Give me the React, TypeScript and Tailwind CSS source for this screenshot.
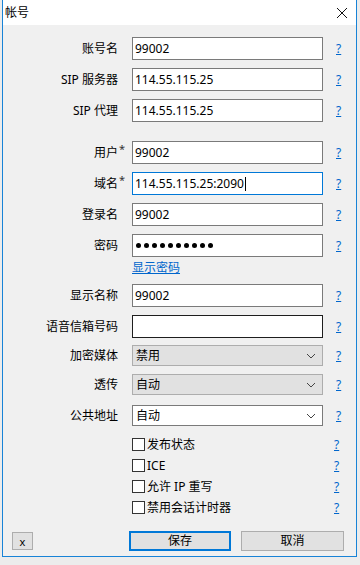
import React from 'react';

const font = { fontFamily: '"Noto Sans", "Noto Sans CJK SC", sans-serif' };

function Help() {
  return <span className="ml-[13px] text-[12px] leading-none text-[#0066cc] underline">?</span>;
}

function Label({ text, star }: { text: string; star?: boolean }) {
  return (
    <div className="w-[115px] shrink-0 text-right text-[12px] leading-none text-black">
      <span className="relative">
        {text}
        {star && <span className="absolute left-full top-[-1px] ml-[1px] text-[11px] text-[#333]">*</span>}
      </span>
    </div>
  );
}

function TextRow({
  label,
  value,
  star,
  border = 'border-[#7a7a7a]',
  caret,
  mt,
}: {
  label: string;
  value?: string;
  star?: boolean;
  border?: string;
  caret?: boolean;
  mt: string;
}) {
  return (
    <div className={`flex items-center ${mt}`}>
      <Label text={label} star={star} />
      <div className={`ml-[14px] flex h-[23px] w-[191px] items-center border bg-white pl-[2px] text-[12px] text-black ${border}`}>
        <span>{value}</span>
        {caret && <span className="ml-[1px] h-[14px] w-px bg-black" />}
      </div>
      <Help />
    </div>
  );
}

function Chevron() {
  return (
    <svg width="10" height="6" viewBox="0 0 10 6" className="mr-[6px]">
      <path d="M1 1 L5 5 L9 1" fill="none" stroke="#444" strokeWidth="1" />
    </svg>
  );
}

function SelectRow({ label, value, white, mt }: { label: string; value: string; white?: boolean; mt: string }) {
  return (
    <div className={`flex items-center ${mt}`}>
      <Label text={label} />
      <div
        className={`ml-[14px] flex h-[21px] w-[191px] items-center justify-between border pl-[3px] text-[12px] text-black ${
          white ? 'border-[#7a7a7a] bg-white' : 'border-[#adadad] bg-[#e1e1e1]'
        }`}
      >
        <span>{value}</span>
        <Chevron />
      </div>
      <Help />
    </div>
  );
}

function CheckRow({ label }: { label: string }) {
  return (
    <div className="flex h-[21px] items-center">
      <div className="ml-[129px] h-[13px] w-[13px] shrink-0 border border-[#333] bg-white" />
      <span className="ml-[2px] w-[187px] text-[12px] leading-none text-black">{label}</span>
      <span className="text-[12px] leading-none text-[#0066cc] underline">?</span>
    </div>
  );
}

export default function App() {
  return (
    <div className="flex h-[565px] w-[360px] bg-[#ececec]" style={font}>
      <div className="ml-[2px] flex h-[557px] w-[355px] flex-col border border-t-0 border-[#1883d7] bg-[#f0f0f0]">
        <div className="flex h-[25px] items-center justify-between bg-white pl-[2px]">
          <span className="text-[12px] leading-none text-black">帐号</span>
          <svg width="12" height="12" viewBox="0 0 12 12" className="mr-[8px] mt-[1px]">
            <path d="M1 1 L11 11 M11 1 L1 11" stroke="#111" strokeWidth="1" />
          </svg>
        </div>

        <TextRow label="账号名" value="99002" mt="mt-[12px]" />
        <TextRow label="SIP 服务器" value="114.55.115.25" mt="mt-[8px]" />
        <TextRow label="SIP 代理" value="114.55.115.25" mt="mt-[8px]" />

        <TextRow label="用户" star value="99002" mt="mt-[19px]" />
        <TextRow label="域名" star value="114.55.115.25:2090" border="border-[#0078d7]" caret mt="mt-[8px]" />
        <TextRow label="登录名" value="99002" mt="mt-[8px]" />
        <div className="mt-[8px] flex items-center">
          <Label text="密码" />
          <div className="ml-[14px] flex h-[23px] w-[191px] items-center gap-[3px] border border-[#7a7a7a] bg-white pl-[3px]">
            {Array.from({ length: 10 }).map((_, i) => (
              <span key={i} className="h-[5px] w-[5px] rounded-full bg-black" />
            ))}
          </div>
          <Help />
        </div>
        <div className="mt-[3px] h-[16px] pl-[129px] text-[12px] leading-[16px] text-[#0066cc] underline">显示密码</div>

        <TextRow label="显示名称" value="99002" mt="mt-[8px]" />
        <TextRow label="语音信箱号码" border="border-[#1e1e1e]" mt="mt-[8px]" />

        <SelectRow label="加密媒体" value="禁用" mt="mt-[7px]" />
        <SelectRow label="透传" value="自动" mt="mt-[8px]" />
        <SelectRow label="公共地址" value="自动" white mt="mt-[10px]" />

        <div className="mt-[8px] flex flex-col">
          <CheckRow label="发布状态" />
          <CheckRow label="ICE" />
          <CheckRow label="允许 IP 重写" />
          <CheckRow label="禁用会话计时器" />
        </div>

        <div className="mt-[13px] flex items-end">
          <div className="mb-[1px] ml-[9px] flex h-[18px] w-[21px] items-center justify-center border border-[#adadad] bg-[#e1e1e1] text-[11px] leading-none text-black">
            x
          </div>
          <div className="ml-[96px] flex h-[20px] w-[102px] items-center justify-center border-2 border-[#0078d7] bg-[#e1e1e1] text-[12px] text-black">
            保存
          </div>
          <div className="ml-[10px] flex h-[20px] w-[103px] items-center justify-center border border-[#adadad] bg-[#e1e1e1] text-[12px] text-black">
            取消
          </div>
        </div>
      </div>
    </div>
  );
}
